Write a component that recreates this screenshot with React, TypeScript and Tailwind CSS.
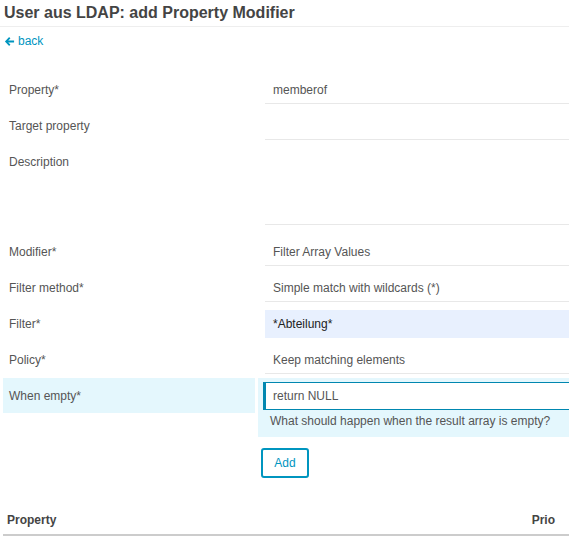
import React from "react";

type Row = { label: string; value?: string; kind?: "text" | "textarea" | "filter" };

const rows: Row[] = [
  { label: "Property*", value: "memberof" },
  { label: "Target property" },
  { label: "Description", kind: "textarea" },
  { label: "Modifier*", value: "Filter Array Values" },
  { label: "Filter method*", value: "Simple match with wildcards (*)" },
  { label: "Filter*", value: "*Abteilung*", kind: "filter" },
  { label: "Policy*", value: "Keep matching elements" },
];

function BackArrow() {
  return (
    <svg width="11" height="11" viewBox="0 0 12 12" className="shrink-0">
      <path d="M5.6 1.2 L1 6 L5.6 10.8 L7 9.4 L4.6 7 H11 V5 H4.6 L7 2.6 Z" fill="#0095bf" />
    </svg>
  );
}

function FormRow({ row }: { row: Row }) {
  const isArea = row.kind === "textarea";
  const isFilter = row.kind === "filter";
  return (
    <div className={`flex items-start pt-[4px] ${isArea ? "pb-[9px]" : "pb-[4px]"}`}>
      <div className="ml-[3px] flex h-[28px] w-[252px] items-center pl-[6px]">{row.label}</div>
      <div className="ml-[3px] flex-1 pl-[7px]">
        <div
          className={`flex border-b border-[#e8e8e8] pl-[8px] ${
            isArea ? "h-[77px] items-start pt-[6px]" : "h-[28px] items-center"
          } ${isFilter ? "border-transparent bg-[#e8f0fe] text-[#222]" : ""}`}
        >
          {row.value ?? ""}
        </div>
      </div>
    </div>
  );
}

export default function App() {
  return (
    <div className="min-h-[537px] overflow-hidden bg-white text-[12px] leading-[16px] text-[#555]" style={{ fontFamily: '"Liberation Sans", Arial, sans-serif' }}>
      <h1 className="border-b border-[#eee] px-[4px] py-[4px] text-[16px] font-bold leading-[18px] text-[#444]">
        User aus LDAP: add Property Modifier
      </h1>

      <a className="mt-[6px] flex items-center gap-[3px] px-[4px] text-[12px] text-[#0095bf]">
        <BackArrow />
        <span>back</span>
      </a>

      <div className="mt-[23px]">
        {rows.map((r) => (
          <FormRow key={r.label} row={r} />
        ))}

        <div className="flex items-start">
          <div className="ml-[3px] flex h-[35px] w-[252px] items-center bg-[#e4f7fd] pl-[6px]">When empty*</div>
          <div className="ml-[3px] mr-[-4px] flex-1 bg-[#e4f7fd] pb-[8px] pl-[5px] pt-[4px]">
            <div className="flex h-[28px] items-center border border-l-[3px] border-[#0087b0] bg-white pl-[7px]">
              return NULL
            </div>
            <div className="mt-[3px] pl-[7px]">What should happen when the result array is empty?</div>
          </div>
        </div>

        <div className="ml-[261px] mt-[11px]">
          <button className="h-[30px] w-[48px] rounded-[3px] border-2 border-[#0095bf] bg-white text-[12px] text-[#0095bf]">
            Add
          </button>
        </div>
      </div>

      <div className="ml-[3px] mt-[27px] flex justify-between border-b-2 border-[#ccc] pb-[6px] pl-[4px] pr-[14px] pt-[7px] font-bold text-[#444]">
        <span>Property</span>
        <span>Prio</span>
      </div>
    </div>
  );
}
